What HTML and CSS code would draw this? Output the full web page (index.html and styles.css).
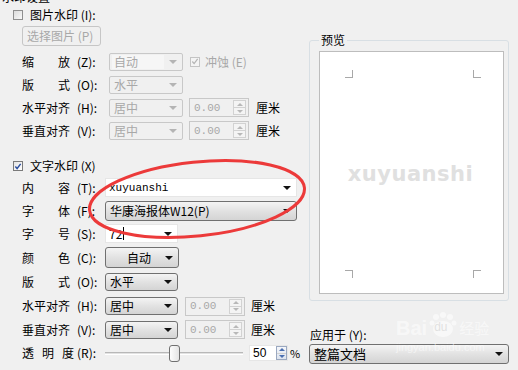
FILE: index.html
```html
<!DOCTYPE html>
<html lang="zh-CN">
<head>
    <meta charset="UTF-8">
    <title>水印设置</title>
    <link rel="stylesheet" href="styles.css">
</head>
<body>
    <div class="dialog">
        <div class="left">
            <div class="title"><span>水印设置</span></div>

            <!-- 图片水印 -->
            <div class="check-row top-check">
                <span class="box"></span>
                <span>图片水印 (I):</span>
            </div>
            <div class="btn-row">
                <span class="btn-off">选择图片 (P)</span>
            </div>

            <div class="row first">
                <span class="lbl wide"><span class="chars"><i>缩</i><i>放</i></span>(Z):</span>
                <span class="sel off"><span class="sel-fill">自动</span><span class="arr"></span></span>
                <span class="box off-check">
                    <svg width="9" height="9" viewBox="0 0 9 9"><path d="M1.5 4.5 L3.5 6.8 L7.5 1.5" fill="none" stroke="#b4b4b4" stroke-width="1.4"/></svg>
                </span>
                <span class="muted">冲蚀 (E)</span>
            </div>
            <div class="row">
                <span class="lbl wide"><span class="chars"><i>版</i><i>式</i></span>(O):</span>
                <span class="sel off">水平<span class="arr"></span></span>
            </div>
            <div class="row">
                <span class="lbl wide"><span class="chars"><i>水平对齐</i></span>(H):</span>
                <span class="sel off">居中<span class="arr"></span></span>
                <span class="spin off">0.00<span class="spin-btns"><b class="up"></b><b class="down"></b></span></span>
                <span class="unit">厘米</span>
            </div>
            <div class="row">
                <span class="lbl wide"><span class="chars"><i>垂直对齐</i></span>(V):</span>
                <span class="sel off">居中<span class="arr"></span></span>
                <span class="spin off">0.00<span class="spin-btns"><b class="up"></b><b class="down"></b></span></span>
                <span class="unit">厘米</span>
            </div>

            <!-- 文字水印 -->
            <div class="check-row text-check">
                <span class="box on">
                    <svg width="9" height="9" viewBox="0 0 9 9"><path d="M1.5 4.5 L3.5 6.8 L7.5 1.5" fill="none" stroke="#2c4fa0" stroke-width="1.6"/></svg>
                </span>
                <span>文字水印 (X)</span>
            </div>

            <div class="row">
                <span class="lbl"><span class="chars"><i>内</i><i>容</i></span>(T):</span>
                <span class="field long"><span class="mono">xuyuanshi</span><span class="arr dark"></span></span>
            </div>
            <div class="row">
                <span class="lbl"><span class="chars"><i>字</i><i>体</i></span>(F):</span>
                <span class="sel on long tall">华康海报体W12(P)<span class="arr dark"></span></span>
            </div>
            <div class="row">
                <span class="lbl"><span class="chars"><i>字</i><i>号</i></span>(S):</span>
                <span class="field short">72<span class="caret"></span><span class="arr dark"></span></span>
            </div>
            <div class="row r25">
                <span class="lbl"><span class="chars"><i>颜</i><i>色</i></span>(C):</span>
                <span class="sel on color-btn"><span class="center">自动</span><span class="arr dark"></span></span>
            </div>
            <div class="row r24">
                <span class="lbl"><span class="chars"><i>版</i><i>式</i></span>(O):</span>
                <span class="sel on">水平<span class="arr dark"></span></span>
            </div>
            <div class="row r24">
                <span class="lbl"><span class="chars"><i>水平对齐</i></span>(H):</span>
                <span class="sel on">居中<span class="arr dark"></span></span>
                <span class="spin off lower">0.00<span class="spin-btns"><b class="up"></b><b class="down"></b></span></span>
                <span class="unit lower-unit">厘米</span>
            </div>
            <div class="row">
                <span class="lbl"><span class="chars"><i>垂直对齐</i></span>(V):</span>
                <span class="sel on">居中<span class="arr dark"></span></span>
                <span class="spin off lower">0.00<span class="spin-btns"><b class="up"></b><b class="down"></b></span></span>
                <span class="unit lower-unit">厘米</span>
            </div>
            <div class="row r24">
                <span class="lbl"><span class="chars three"><i>透</i><i>明</i><i>度</i></span>(R):</span>
                <span class="slider"><span class="track"></span><span class="thumb"></span></span>
                <span class="spin pct">50<span class="spin-btns blue"><b class="up"></b><b class="down"></b></span></span>
                <span class="pct-sign">%</span>
            </div>
        </div>

        <div class="right">
            <fieldset class="preview">
                <legend>预览</legend>
                <div class="page">
                    <span class="mark tl"></span>
                    <span class="mark tr"></span>
                    <span class="mark bl"></span>
                    <span class="mark br"></span>
                    <span class="wm-text">xuyuanshi</span>
                </div>
            </fieldset>
            <div class="apply-lbl">应用于 (Y):</div>
            <span class="sel on apply">整篇文档<span class="arr dark"></span></span>
        </div>
    </div>

    <!-- red hand-drawn ellipse over the font rows -->
    <svg class="circle" width="518" height="370" viewBox="0 0 518 370">
        <ellipse cx="197" cy="199" rx="108" ry="37" transform="rotate(-6 197 199)" fill="none" stroke="#ec3a3a" stroke-width="3"/>
    </svg>

    <!-- site watermark -->
    <div class="baidu">
        <div class="baidu-top">
            <span>Bai</span>
            <span class="paw">
                <svg width="30" height="26" viewBox="0 0 30 26">
                    <circle cx="8" cy="5" r="3"/><circle cx="15" cy="3" r="3"/><circle cx="22" cy="5" r="3"/>
                    <circle cx="4" cy="11" r="2.5"/><circle cx="26" cy="11" r="2.5"/>
                    <ellipse cx="15" cy="17" rx="10" ry="8"/>
                </svg>
                <em>du</em>
            </span>
            <span class="jy">经验</span>
        </div>
        <div class="baidu-url">jingyan.baidu.com</div>
    </div>
</body>
</html>
```

FILE: styles.css
```css
/* Reset */
* {
    margin: 0;
    padding: 0;
    box-sizing: border-box;
}

body {
    width: 518px;
    height: 370px;
    overflow: hidden;
    position: relative;
    background-color: #f0f0f0;
    font-family: "Noto Sans CJK SC", "Liberation Sans", sans-serif;
    font-size: 12px;
    line-height: 14px;
    color: #000;
}

i, b, em {
    font-style: normal;
    font-weight: normal;
}

.dialog {
    display: flex;
}

.left {
    width: 305px;
    flex: none;
}

.right {
    flex: 1;
    padding-left: 4px;
}

/* Cut-off group title at the very top */
.title {
    height: 4px;
    overflow: hidden;
    padding-left: 2px;
}

.title span {
    display: block;
    margin-top: -10px;
}

/* Checkbox rows */
.check-row {
    display: flex;
    align-items: center;
    gap: 7px;
    padding-left: 13px;
}

.top-check {
    height: 22px;
}

.text-check {
    height: 20px;
    margin-top: 14px;
}

.box {
    width: 10px;
    height: 10px;
    flex: none;
    display: flex;
    align-items: center;
    justify-content: center;
    border: 1px solid #8f8f8f;
    background: linear-gradient(135deg, #dcdcdc, #f8f8f8);
}

.box.on {
    border-color: #7a7a7a;
    background: linear-gradient(135deg, #e4e4e4, #ffffff);
}

.box.off-check {
    margin-left: 7px;
    margin-right: 5px;
    border-color: #c4c4c4;
    background: #f4f4f4;
}

.muted {
    color: #a8a8a8;
}

/* Disabled push button */
.btn-row {
    padding-left: 22px;
}

.btn-off {
    display: inline-flex;
    align-items: center;
    height: 20px;
    width: 79px;
    padding-left: 4px;
    border: 1px solid #c6c6c6;
    border-radius: 3px;
    color: #a8a8a8;
}

/* Label + control rows */
.row {
    display: flex;
    align-items: center;
    height: 23px;
    padding-left: 22px;
}

.row.first {
    margin-top: 4px;
}

.row.r24 {
    height: 24px;
}

.row.r25 {
    height: 25px;
}

.lbl {
    display: flex;
    width: 83px;
    flex: none;
}

.lbl.wide {
    width: 87px;
}

.chars {
    display: flex;
    justify-content: space-between;
    width: 48px;
    margin-right: 7px;
}

.chars.three {
    width: 52px;
    margin-right: 3px;
}

/* Combo boxes */
.sel {
    display: flex;
    align-items: center;
    width: 73px;
    height: 18px;
    padding-left: 4px;
    padding-right: 5px;
    border: 1px solid #707070;
    border-radius: 2px;
}

.sel.off {
    width: 74px;
    border-color: #c8c8c8;
    color: #a8a8a8;
}

.sel-fill {
    width: 52px;
    height: 14px;
    margin-left: -2px;
    padding-left: 2px;
    background-color: #f6f6f6;
}

.sel.on {
    background: linear-gradient(#f4f4f4, #e2e2e2 50%, #d4d4d4);
    border-radius: 3px;
}

.sel.long {
    width: 192px;
}

.sel.tall {
    height: 20px;
}

.color-btn {
    height: 21px;
    width: 74px;
}

.center {
    flex: 1;
    text-align: center;
    padding-left: 3px;
}

.arr {
    margin-left: auto;
    width: 0;
    height: 0;
    border-left: 4px solid transparent;
    border-right: 4px solid transparent;
    border-top: 4px solid #b4b4b4;
}

.arr.dark {
    border-top-color: #111;
}

/* Edit fields */
.field {
    display: flex;
    align-items: center;
    height: 19px;
    padding-left: 3px;
    padding-right: 5px;
    background-color: #fff;
    border: 1px solid #e6e6e6;
}

.field.long {
    width: 192px;
}

.field.short {
    width: 73px;
}

.mono {
    font-family: "Liberation Mono", monospace;
    font-size: 11px;
}

.caret {
    width: 1px;
    height: 13px;
    margin-left: 1px;
    background-color: #000;
}

/* Spin boxes */
.spin {
    display: flex;
    align-items: center;
    width: 60px;
    height: 19px;
    margin-left: 6px;
    padding-left: 4px;
    border: 1px solid #c8c8c8;
    color: #a8a8a8;
    font-family: "Liberation Mono", monospace;
    font-size: 11px;
}

.spin.lower {
    margin-left: 7px;
}

.spin-btns {
    display: flex;
    flex-direction: column;
    margin-left: auto;
    margin-right: 2px;
    width: 13px;
    height: 15px;
    border: 1px solid #d2d2d2;
    background: #f4f4f4;
}

.spin-btns b {
    flex: 1;
    display: flex;
    align-items: center;
    justify-content: center;
}

.spin-btns b::after {
    content: "";
    border-left: 3px solid transparent;
    border-right: 3px solid transparent;
}

.spin-btns .up {
    border-bottom: 1px solid #d2d2d2;
}

.spin-btns .up::after {
    border-bottom: 3px solid #b8b8b8;
}

.spin-btns .down::after {
    border-top: 3px solid #b8b8b8;
}

.spin-btns.blue {
    border-color: #9aa8c0;
    background: linear-gradient(#f4f6fa, #dde4ee);
}

.spin-btns.blue .up::after {
    border-bottom-color: #4a6fb0;
}

.spin-btns.blue .down::after {
    border-top-color: #4a6fb0;
}

.unit {
    margin-left: 7px;
}

.unit.lower-unit {
    margin-left: 6px;
}

/* Transparency slider */
.slider {
    position: relative;
    display: flex;
    align-items: center;
    width: 138px;
    height: 18px;
}

.track {
    width: 100%;
    height: 3px;
    border-top: 1px solid #b8b8b8;
    border-bottom: 1px solid #fff;
    background-color: #e2e2e2;
}

.thumb {
    position: absolute;
    left: 64px;
    top: 1px;
    width: 11px;
    height: 17px;
    border: 1px solid #707070;
    border-radius: 3px;
    background: linear-gradient(90deg, #fdfdfd, #e4e4e4);
}

.spin.pct {
    width: 39px;
    height: 16px;
    margin-left: 6px;
    padding-left: 3px;
    background-color: #fff;
    border-color: #e6e6e6;
    color: #000;
    font-family: "Liberation Sans", sans-serif;
    font-size: 12px;
}

.spin.pct .spin-btns {
    margin-right: 0;
    height: 14px;
    width: 11px;
}

.pct-sign {
    margin-left: 2px;
    font-size: 11px;
}

/* Preview group */
.preview {
    margin-top: 33px;
    width: 200px;
    height: 268px;
    border: 1px solid #d8dfe4;
    border-radius: 3px;
}

.preview legend {
    margin-left: 9px;
    padding: 0 2px;
    line-height: 14px;
}

.page {
    position: relative;
    display: flex;
    align-items: center;
    justify-content: center;
    width: 185px;
    height: 243px;
    margin-top: 4px;
    margin-left: 9px;
    background-color: #fff;
    border: 1px solid #bdbdbd;
}

.mark {
    position: absolute;
    width: 8px;
    height: 8px;
    border-color: #a8a8a8;
    border-style: solid;
    border-width: 0;
}

.mark.tl {
    left: 25px;
    top: 18px;
    border-right-width: 1px;
    border-bottom-width: 1px;
}

.mark.tr {
    right: 22px;
    top: 18px;
    border-left-width: 1px;
    border-bottom-width: 1px;
}

.mark.bl {
    left: 25px;
    bottom: 15px;
    border-right-width: 1px;
    border-top-width: 1px;
}

.mark.br {
    right: 22px;
    bottom: 15px;
    border-left-width: 1px;
    border-top-width: 1px;
}

.wm-text {
    margin-top: 2px;
    margin-right: 2px;
    font-family: "DejaVu Sans", sans-serif;
    font-weight: bold;
    font-size: 21px;
    letter-spacing: 0.5px;
    color: #e0e0e0;
}

.apply-lbl {
    margin-top: 27px;
    padding-left: 1px;
}

.sel.apply {
    width: 200px;
    height: 20px;
    margin-top: 2px;
    font-size: 13px;
}

/* Overlays */
.circle {
    position: absolute;
    left: 0;
    top: 0;
    pointer-events: none;
}

.baidu {
    position: absolute;
    left: 396px;
    top: 312px;
    color: rgba(255, 255, 255, 0.55);
    font-family: "Liberation Sans", sans-serif;
}

.baidu-top {
    display: flex;
    align-items: flex-end;
    gap: 1px;
    font-size: 20px;
    font-weight: bold;
    line-height: 20px;
}

.paw {
    position: relative;
    display: flex;
    width: 30px;
    height: 26px;
}

.paw svg {
    fill: rgba(255, 255, 255, 0.55);
}

.paw em {
    position: absolute;
    left: 6px;
    bottom: 1px;
    font-size: 12px;
    color: rgba(200, 200, 200, 0.5);
}

.jy {
    font-family: "Noto Sans CJK SC", sans-serif;
    font-size: 15px;
    font-weight: normal;
}

.baidu-url {
    margin-top: 3px;
    font-size: 11px;
    line-height: 12px;
}
```
